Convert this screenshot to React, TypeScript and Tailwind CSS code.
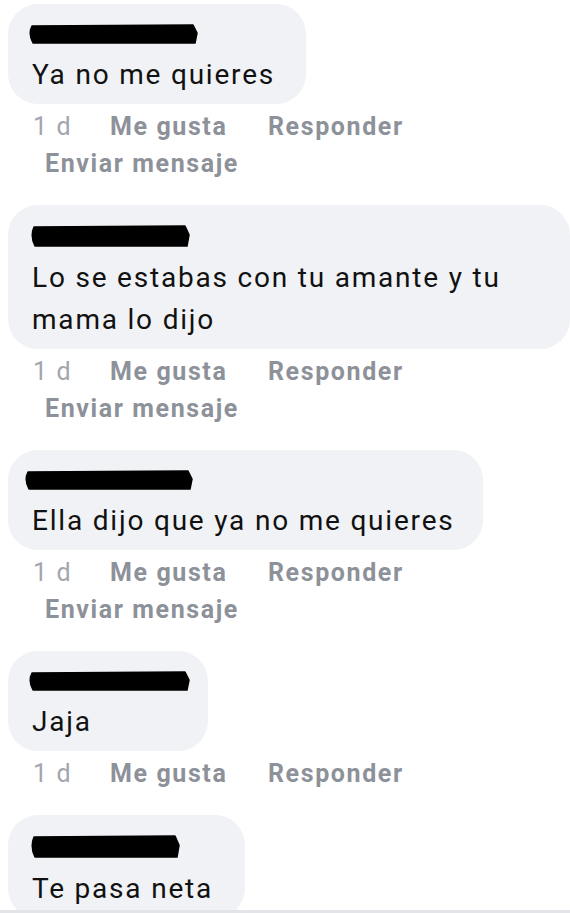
import React from 'react';

interface Comment {
  text: React.ReactNode;
  width: number;
  bar: { left: number; width: number; height: number };
  actions: boolean;
  message: boolean;
}

const comments: Comment[] = [
  { text: 'Ya no me quieres', width: 298, bar: { left: -4, width: 170, height: 20 }, actions: true, message: true },
  {
    text: (
      <>
        Lo se estabas con tu amante y tu
        <br />
        mama lo dijo
      </>
    ),
    width: 562,
    bar: { left: -2, width: 160, height: 22 },
    actions: true,
    message: true,
  },
  { text: 'Ella dijo que ya no me quieres', width: 475, bar: { left: -8, width: 169, height: 20 }, actions: true, message: true },
  { text: 'Jaja', width: 200, bar: { left: -4, width: 162, height: 20 }, actions: true, message: false },
  { text: 'Te pasa neta', width: 237, bar: { left: -2, width: 150, height: 23 }, actions: false, message: false },
];

const Redacted: React.FC<{ left: number; width: number; height: number }> = ({ left, width, height }) => (
  <svg width={width} height={height} viewBox={`0 0 ${width} ${height}`} style={{ marginLeft: left }} className="block">
    <path
      d={`M4 2 L${width - 5} 1 L${width - 1} ${height * 0.45} L${width - 3} ${height - 1} L5 ${height - 1} Q0 ${height * 0.5} 4 2 Z`}
      fill="#000"
      stroke="#000"
      strokeWidth="1.5"
      strokeLinejoin="round"
    />
  </svg>
);

const Bubble: React.FC<{ c: Comment }> = ({ c }) => (
  <div
    className="rounded-[30px] bg-[#f0f2f5] pl-[24px] pr-[32px] pt-[20px] pb-[8px]"
    style={{ width: c.width }}
  >
    <Redacted {...c.bar} />
    <div className="mt-[10px] text-[28px] leading-[42px] tracking-[1.8px] text-[#111] whitespace-nowrap">{c.text}</div>
  </div>
);

export default function App() {
  return (
    <div className="relative w-[570px] h-[913px] overflow-hidden bg-white font-['Roboto',sans-serif]">
      <div className="flex flex-col pl-[8px] pt-[4px]">
        {comments.map((c, i) => (
          <div key={i} className="flex flex-col">
            <Bubble c={c} />
            {c.actions && (
              <div className="mt-[4px] text-[25px] tracking-[1.6px] mb-[23px]">
                <div className="flex items-center h-[37px] pl-[25px]">
                  <span className="text-[#a2a6ad] w-[77px]">1 d</span>
                  <span className="font-bold text-[#8d9199] w-[158px]">Me gusta</span>
                  <span className="font-bold text-[#8d9199]">Responder</span>
                </div>
                {c.message && (
                  <div className="flex items-center h-[37px] pl-[37px] font-bold text-[#8d9199]">Enviar mensaje</div>
                )}
              </div>
            )}
          </div>
        ))}
      </div>
      <div className="absolute left-0 right-0 bottom-0 h-[3px] bg-[#e2e4e8]" />
    </div>
  );
}
